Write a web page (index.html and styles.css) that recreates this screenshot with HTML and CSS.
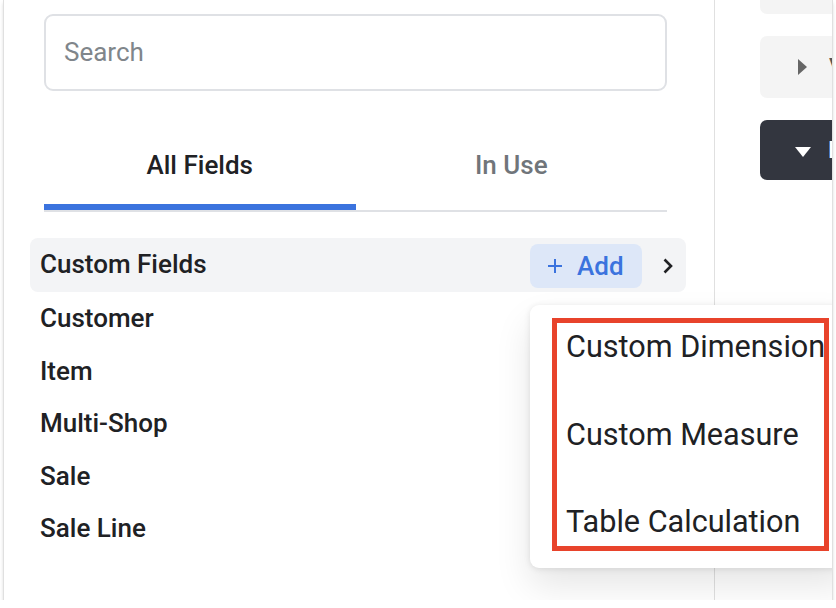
FILE: index.html
```html
<!DOCTYPE html>
<html>
<head>
    <meta charset="utf-8">
    <title>Field picker</title>
    <link rel="stylesheet" href="styles.css">
</head>
<body>
    <div class="frame">
        <div class="fields-panel">
            <div class="search">Search</div>

            <div class="tabs">
                <div class="tab active">All Fields</div>
                <div class="tab">In Use</div>
            </div>

            <div class="field-list">
                <div class="custom-row">
                    <span class="row-label">Custom Fields</span>
                    <span class="add-btn">
                        <svg width="16" height="16" viewBox="0 0 16 16"><path d="M8 1v14M1 8h14" stroke="#3b73de" stroke-width="2" fill="none"/></svg>
                        Add
                    </span>
                    <svg class="chev" width="12" height="16" viewBox="0 0 12 16"><path d="M2.5 1.5l6.5 6.5-6.5 6.5" stroke="#202124" stroke-width="2.6" fill="none"/></svg>
                </div>
                <div class="field-item">Customer</div>
                <div class="field-item">Item</div>
                <div class="field-item">Multi-Shop</div>
                <div class="field-item">Sale</div>
                <div class="field-item">Sale Line</div>
            </div>
        </div>

        <div class="viz-panel">
            <div class="viz-block top"></div>
            <div class="viz-block">
                <span class="tri-right"></span><span class="viz-label">V</span>
            </div>
            <div class="viz-block dark">
                <span class="tri-down"></span><span class="viz-label">D</span>
            </div>
        </div>

        <div class="menu">
            <div class="menu-item">Custom Dimension</div>
            <div class="menu-item">Custom Measure</div>
            <div class="menu-item">Table Calculation</div>
            <div class="highlight"></div>
        </div>
    </div>
</body>
</html>
```

FILE: styles.css
```css
body{
    margin: 0;
    background: #fff;
    font-family: Roboto, "Liberation Sans", sans-serif;
    color: #202124;
}
.frame{
    position: relative;
    margin-left: 4px;
    width: 828px;
    height: 600px;
    display: flex;
    overflow: hidden;
    background: #fff;
    box-shadow: 0 0 0 1px #e0e0e0, 0 3px 4px rgba(0,0,0,.22);
}

/* left: field picker */
.fields-panel{
    box-sizing: border-box;
    width: 711px;
    flex-shrink: 0;
    padding: 14px 47px 0 40px;
    border-right: 1px solid #e0e0e0;
}
.search{
    box-sizing: border-box;
    height: 77px;
    border: 2px solid #dfe1e5;
    border-radius: 9px;
    padding-left: 18px;
    line-height: 73px;
    font-size: 26px;
    color: #80868b;
}
.tabs{
    display: flex;
    border-bottom: 2px solid #dfe1e5;
}
.tab{
    flex: 1;
    text-align: center;
    padding: 60px 0 31px;
    line-height: 28px;
    font-size: 26px;
    font-weight: 500;
    color: #70757a;
}
.tab.active{
    color: #202124;
    padding-bottom: 25px;
    border-bottom: 6px solid #3b73de;
}
.field-list{
    margin: 26px -19px 0 -14px;
}
.custom-row{
    display: flex;
    align-items: center;
    height: 54px;
    padding: 0 12px 0 10px;
    background: #f3f4f6;
    border-radius: 8px;
}
.row-label{
    flex: 1;
    padding-bottom: 3px;
    font-size: 26px;
    font-weight: 500;
}
.add-btn{
    box-sizing: border-box;
    display: flex;
    align-items: center;
    gap: 14px;
    width: 112px;
    height: 44px;
    margin-top: 2px;
    padding-left: 17px;
    background: #dde7f8;
    border-radius: 8px;
    font-size: 26px;
    font-weight: 500;
    color: #3b73de;
}
.chev{
    margin-left: 20px;
    margin-top: 2px;
}
.field-item{
    height: 52.5px;
    line-height: 52.5px;
    padding-left: 10px;
    padding-bottom: 0;
    font-size: 26px;
    font-weight: 500;
}
.field-item:first-of-type{
    margin-top: 0;
}

/* right: visualization column, cut off */
.viz-panel{
    flex: 1;
    display: flex;
    flex-direction: column;
    gap: 22px;
    padding-left: 45px;
}
.viz-block{
    display: flex;
    align-items: center;
    width: 300px;
    height: 62px;
    flex-shrink: 0;
    border-radius: 7px;
    background: #f4f4f4;
}
.viz-block.top{
    height: 14px;
    border-radius: 0 0 7px 7px;
}
.viz-block.dark{
    height: 60px;
    background: #33363f;
}
.tri-right{
    margin-left: 38px;
    width: 0;
    height: 0;
    border-top: 8px solid transparent;
    border-bottom: 8px solid transparent;
    border-left: 9px solid #666;
}
.tri-down{
    margin-left: 35px;
    margin-top: 4px;
    width: 0;
    height: 0;
    border-left: 8.5px solid transparent;
    border-right: 8.5px solid transparent;
    border-top: 10px solid #fff;
}
.viz-label{
    margin-left: 22px;
    font-size: 24px;
    font-weight: 500;
    color: #555;
}
.viz-block.dark .viz-label{
    margin-left: 17px;
    color: #fff;
}

/* add menu popup */
.menu{
    position: absolute;
    left: 526px;
    top: 305px;
    width: 320px;
    height: 263px;
    background: #fff;
    border-radius: 9px;
    box-shadow: 0 1px 6px rgba(0,0,0,.1), 0 18px 36px rgba(0,0,0,.1);
}
.menu-item{
    height: 87.5px;
    line-height: 84px;
    padding-left: 36px;
    font-size: 30.6px;
    color: #202124;
    white-space: nowrap;
}
.highlight{
    position: absolute;
    left: 22px;
    top: 13px;
    width: 277px;
    height: 233px;
    box-sizing: border-box;
    border: 5px solid #e8432b;
}
```
